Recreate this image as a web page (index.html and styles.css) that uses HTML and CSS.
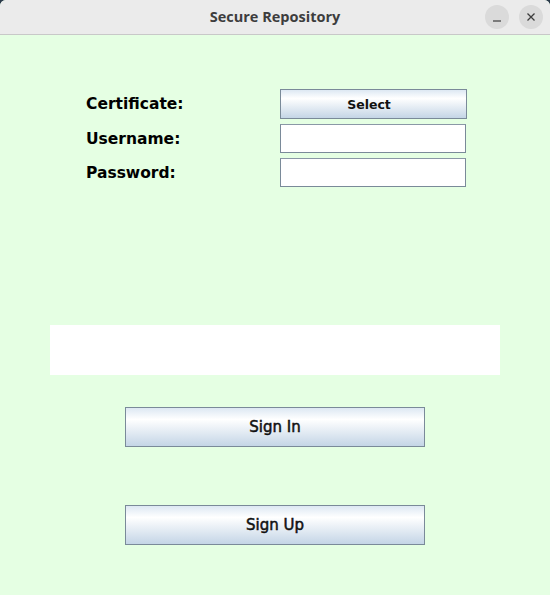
FILE: index.html
```html
<!DOCTYPE html>
<html>
<head>
<meta charset="utf-8">
<link rel="stylesheet" href="styles.css">
</head>
<body>
<div class="window">
  <div class="titlebar">
    <span class="title">Secure Repository</span>
    <div class="controls">
      <span class="ctl"><svg width="24" height="24" viewBox="0 0 24 24"><line x1="8" y1="16" x2="16" y2="16" stroke="#3c3c3c" stroke-width="1.2"/></svg></span>
      <span class="ctl"><svg width="24" height="24" viewBox="0 0 24 24"><path d="M8.5 8.5 L15.5 15.5 M15.5 8.5 L8.5 15.5" stroke="#3c3c3c" stroke-width="1.3"/></svg></span>
    </div>
  </div>
  <div class="content">
    <div class="form">
      <label class="lbl">Certificate:</label>
      <button class="btn small">Select</button>
      <label class="lbl">Username:</label>
      <input class="field" type="text">
      <label class="lbl last">Password:</label>
      <input class="field last" type="password">
    </div>
    <div class="status"></div>
    <button class="btn big signin">Sign In</button>
    <button class="btn big signup">Sign Up</button>
  </div>
</div>
</body>
</html>
```
FILE: styles.css
```css
html, body { margin: 0; padding: 0; background: #2b3a4a; }
body { width: 550px; height: 595px; overflow: hidden; }
.window {
  width: 550px; height: 595px; background: #e5ffe3;
  border-radius: 6px 6px 0 0; overflow: hidden;
  display: flex; flex-direction: column;
}
.titlebar {
  height: 34px; background: #ebebeb; border-bottom: 1px solid #c8c8c8;
  position: relative; display: flex; align-items: center; justify-content: center;
  flex: none;
}
.title {
  font-family: "Open Sans", "DejaVu Sans", sans-serif;
  font-weight: 700; font-size: 14.5px; color: #3d3d3d; margin-top: -1px;
}
.controls { position: absolute; right: 7px; top: 5px; display: flex; gap: 10px; }
.ctl {
  width: 24px; height: 24px; border-radius: 50%; background: #dadada;
  display: flex; align-items: center; justify-content: center;
}
.content { flex: 1; display: flex; flex-direction: column; align-items: flex-start; }
.form {
  margin: 54px 0 0 86px;
  display: grid; grid-template-columns: 194px 186px; row-gap: 5px; align-items: center;
}
.lbl {
  font-family: "DejaVu Sans", sans-serif; font-size: 15.5px; font-weight: 700;
  color: #000;
}
.last { margin-top: 1px; }
.btn {
  font-family: "DejaVu Sans", sans-serif; font-weight: 700; color: #111;
  border: 1px solid #7a8a99;
  background: linear-gradient(to bottom, #dde8f3 0%, #ffffff 30%, #c4d5e6 100%);
  padding: 0; margin: 0;
}
.btn.small { width: 187px; height: 30px; font-size: 12.5px; padding-right: 9px; }
.field {
  width: 186px; height: 29px; box-sizing: border-box; margin: 0;
  border: 1px solid #7a8a99; border-top-color: #8a98a6; background: #fff;
}
.status { width: 450px; height: 50px; background: #fff; margin: 138px 0 0 50px; }
.btn.big {
  width: 300px; height: 40px; font-size: 15px; margin-left: 125px;
  font-weight: 400; -webkit-text-stroke: 0.5px #111;
}
.signin { margin-top: 32px; }
.signup { margin-top: 58px; }
```
